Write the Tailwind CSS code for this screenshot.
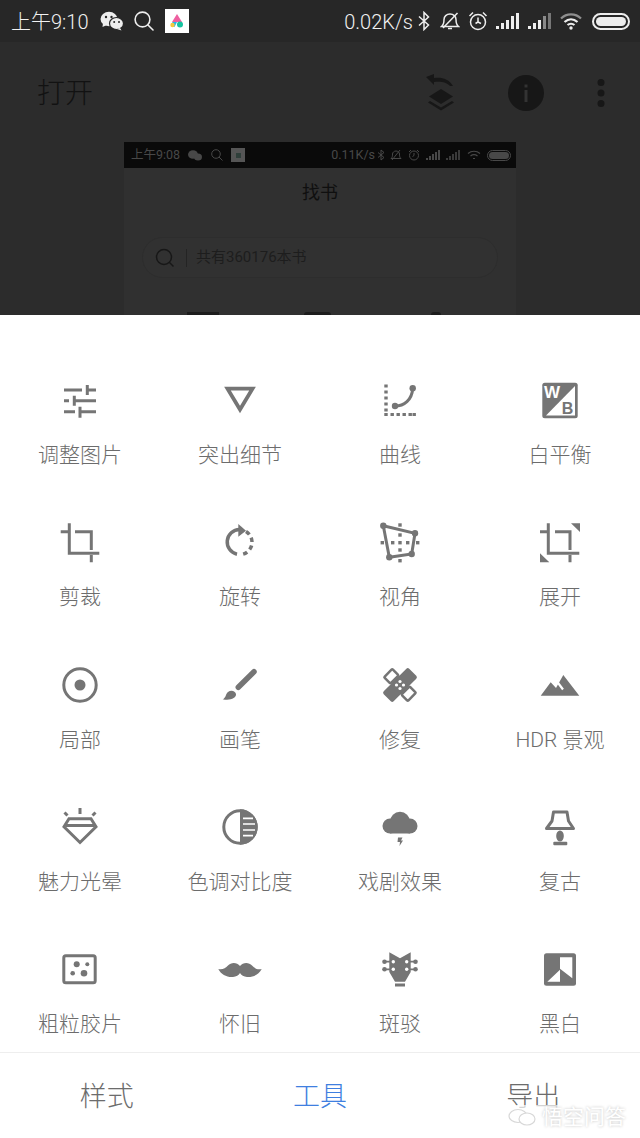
<!doctype html>
<html lang="zh">
<head>
<meta charset="utf-8">
<script src="https://cdn.jsdelivr.net/npm/@tailwindcss/browser@4"></script>
</head>
<body class="m-0 bg-white font-['Roboto','Noto_Sans_CJK_SC',sans-serif]">
<div class="relative w-[640px] h-[1138px] overflow-hidden bg-white">

  <!-- dimmed background screen -->
  <div class="h-[315px] overflow-hidden bg-[#2c2c2c]">
    <div class="flex h-[42px] items-center justify-between bg-[#272727] pl-[11px] pr-[10px] text-[20px] font-light text-[#f2f2f2]">
      <div class="flex items-center">
        <span class="w-[89px] pt-[2px] leading-none">上午9:10</span>
        <svg class="w-[24px] h-[20px] mr-[10px]" viewBox="0 0 24 20" fill="#eeeeee">
          <ellipse cx="9" cy="8" rx="8.500" ry="7.200"/><path d="M3 12 2.500 16 7 14Z"/>
          <ellipse cx="16.500" cy="12.500" rx="7" ry="6" stroke="#272727" stroke-width="1.200"/><path d="M20 17 21.500 19.500 17 18Z"/>
          <circle cx="6" cy="6" r="1.200" fill="#272727"/><circle cx="11.500" cy="6" r="1.200" fill="#272727"/><circle cx="14.200" cy="11" r="1" fill="#272727"/><circle cx="19" cy="11" r="1" fill="#272727"/>
        </svg>
        <svg class="w-[20px] h-[20px] mr-[11px]" viewBox="0 0 20 20" fill="none" stroke="#eeeeee" stroke-width="1.600">
          <circle cx="8.500" cy="8.500" r="7.400"/><path d="M14 14l5 5" stroke-linecap="round"/>
        </svg>
        <svg class="w-[24px] h-[24px]" viewBox="0 0 24 24">
          <rect width="24" height="24" fill="#ffffff"/>
          <path d="M12 5 17 13H7Z" fill="#ee5fa0"/><path d="M7.500 13H12L9.500 18 6 17Z" fill="#25b8e8"/><circle cx="7.500" cy="16" r="2.200" fill="#f6c93c"/><circle cx="15" cy="15.500" r="3" fill="#16c2a0"/>
        </svg>
      </div>
      <div class="flex items-center">
        <span class="mr-[5px] pt-[2px] leading-none">0.02K/s</span>
        <svg class="w-[12px] h-[20px] mr-[10px]" viewBox="0 0 12 20" fill="none" stroke="#eeeeee" stroke-width="1.500"><path d="M1 5.500 10.500 14 6 18.500V1.500L10.500 6 1 14.500"/></svg>
        <svg class="w-[20px] h-[20px] mr-[8px]" viewBox="0 0 20 20" fill="none" stroke="#eeeeee" stroke-width="1.500"><path d="M1.500 15.500h17c-2.500-2-2.500-4-2.500-7 0-3-2.500-5.500-6-5.500S4 5.500 4 8.500c0 3 0 5-2.500 7Z"/><path d="M8 17.500h4"/><path d="M17.500 2 3 17"/></svg>
        <svg class="w-[20px] h-[20px] mr-[8px]" viewBox="0 0 20 20" fill="none" stroke="#eeeeee" stroke-width="1.500"><circle cx="10" cy="11" r="7.500"/><path d="M10 6.500V11l-2.500 1.500M10 11l3 1.500M1.500 5 5 1.500M18.500 5 15 1.500"/></svg>
        <svg class="w-[23px] h-[18px] mr-[9px]" viewBox="0 0 23 18" fill="#eeeeee"><rect x="0" y="14" width="3" height="3"/><rect x="5" y="11" width="3" height="6"/><rect x="10" y="8" width="3" height="9"/><rect x="15" y="4" width="3" height="13"/><rect x="20" y="1" width="3" height="16"/></svg>
        <svg class="w-[23px] h-[18px] mr-[9px]" viewBox="0 0 23 18" fill="#eeeeee"><rect x="0" y="14" width="3" height="3"/><rect x="5" y="11" width="3" height="6"/><rect x="10" y="8" width="3" height="9"/><rect x="15" y="4" width="3" height="13" fill="#8a8a8a"/><rect x="20" y="1" width="3" height="16" fill="#777777"/></svg>
        <svg class="w-[22px] h-[18px] mr-[10px]" viewBox="0 0 22 18" fill="none" stroke-width="2.200"><path d="M1 6.500C6.500 1 15.500 1 21 6.500" stroke="#8f8f8f"/><path d="M4.500 10c4-3.500 9-3.500 13 0" stroke="#eeeeee"/><path d="M7.500 13c2-1.700 5-1.700 7 0" stroke="#eeeeee"/><circle cx="11" cy="16" r="1.700" fill="#eeeeee" stroke="none"/></svg>
        <div class="flex h-[17px] w-[38px] items-center rounded-full border-2 border-[#eeeeee] p-[2px]"><div class="h-full w-full rounded-full bg-[#eeeeee]"></div></div>
      </div>
    </div>

    <div class="flex h-[100px] items-center pl-[37px] pt-[2px] text-[#121212]">
      <span class="w-[380px] pt-[1px] text-[28px] font-light leading-none">打开</span>
      <svg class="w-[40px] h-[44px] mr-[48px] ml-[3px]" viewBox="0 0 40 44" fill="#171717">
        <path d="M21 18 33 25.500 21 33 9 25.500Z"/><path d="M10 30 21 36.500 32 30 34 31.500 21 39.500 8 31.500Z"/>
        <path d="M6 6 14 3V7C22 6 29 8 33 15L30 15C27 11 20 10 14 11V14Z"/>
      </svg>
      <svg class="w-[36px] h-[36px] mr-[52px]" viewBox="0 0 36 36"><circle cx="18" cy="18" r="18" fill="#171717"/><rect x="16.500" y="15" width="3" height="12" fill="#333333"/><rect x="16.500" y="9.500" width="3" height="3" fill="#333333"/></svg>
      <svg class="w-[10px] h-[30px]" viewBox="0 0 10 30" fill="#171717"><circle cx="5" cy="4.500" r="3.500"/><circle cx="5" cy="15" r="3.500"/><circle cx="5" cy="25.500" r="3.500"/></svg>
    </div>

    <div class="ml-[124px] w-[392px] h-[173px] overflow-hidden bg-[#303030]">
      <div class="flex h-[26px] items-center justify-between bg-[#0a0a0a] pl-[7px] pr-[5px] text-[12.500px] text-[#484848]">
        <div class="flex items-center">
          <span class="w-[57px] leading-none">上午9:08</span>
          <svg class="w-[14px] h-[11px] mr-[9px]" viewBox="0 0 14 11" fill="#484848"><ellipse cx="5" cy="4.500" rx="5" ry="4.300"/><ellipse cx="10" cy="7" rx="4" ry="3.500"/></svg>
          <svg class="w-[12px] h-[12px] mr-[8px]" viewBox="0 0 12 12" fill="none" stroke="#484848" stroke-width="1"><circle cx="5" cy="5" r="4.300"/><path d="M8 8l3.500 3.500"/></svg>
          <div class="flex h-[14px] w-[14px] items-center justify-center bg-[#555555]"><div class="h-[5px] w-[5px] bg-[#2f3f3a]"></div></div>
        </div>
        <div class="flex items-center">
          <span class="leading-none mr-[2px]">0.11K/s</span>
          <svg class="w-[8px] h-[12px] mr-[5px]" viewBox="0 0 8 12" fill="none" stroke="#484848"><path d="M1 3.500 7 8.500 4 11V1L7 3.500 1 8.500"/></svg>
          <svg class="w-[12px] h-[12px] mr-[6px]" viewBox="0 0 12 12" fill="none" stroke="#484848"><path d="M1 9.500h10c-1.500-1-1.500-3-1.500-4.500S8 2 6 2 2.500 3.500 2.500 5 2.500 8.500 1 9.500ZM10 1 2 11"/></svg>
          <svg class="w-[12px] h-[12px] mr-[6px]" viewBox="0 0 12 12" fill="none" stroke="#484848"><circle cx="6" cy="6.500" r="4.500"/><path d="M6 4v2.500L4.500 7.500M1 3 3 1M11 3 9 1"/></svg>
          <svg class="w-[14px] h-[10px] mr-[6px]" viewBox="0 0 14 10" fill="#484848"><rect y="8" width="2" height="2"/><rect x="3" y="6" width="2" height="4"/><rect x="6" y="4" width="2" height="6"/><rect x="9" y="2" width="2" height="8"/><rect x="12" width="2" height="10"/></svg>
          <svg class="w-[14px] h-[10px] mr-[7px]" viewBox="0 0 14 10" fill="#3a3a3a"><rect y="8" width="2" height="2"/><rect x="3" y="6" width="2" height="4"/><rect x="6" y="4" width="2" height="6"/><rect x="9" y="2" width="2" height="8"/><rect x="12" width="2" height="10"/></svg>
          <svg class="w-[14px] h-[10px] mr-[6px]" viewBox="0 0 14 10" fill="none" stroke="#484848" stroke-width="1.200"><path d="M1 3.500C4.500.5 9.500.5 13 3.500M3.500 6c2-1.500 5-1.500 7 0M6 8.500h2"/></svg>
          <div class="flex h-[11px] w-[24px] items-center rounded-full border border-[#484848] p-[1px]"><div class="h-full w-full rounded-full bg-[#484848]"></div></div>
        </div>
      </div>
      <div class="flex h-[46px] items-center justify-center pt-[2px] text-[18px] text-[#0f0f0f]">找书</div>
      <div class="mx-[18px] mt-[23px] flex h-[41px] w-[356px] items-center rounded-full border border-[#2d2d2d] bg-[#313131] pl-[12px]">
        <svg class="w-[20px] h-[20px] mr-[11px]" viewBox="0 0 20 20" fill="none" stroke="#171717" stroke-width="1.500"><circle cx="9" cy="9" r="7.500"/><path d="M14.500 14.500l4 4"/></svg>
        <div class="h-[18px] w-px bg-[#242424] mr-[9px]"></div>
        <span class="text-[15px] text-[#1d1d1d]">共有360176本书</span>
      </div>
      <div class="mt-[34px] flex pl-[63px] items-start">
        <div class="h-[3px] w-[32px] bg-[#1c1c1c] mr-[85px]"></div>
        <div class="h-[3px] w-[27px] rounded-t-sm bg-[#1c1c1c] mr-[100px]"></div>
        <div class="h-[3px] w-[10px] rounded-t-full bg-[#1c1c1c]"></div>
      </div>
    </div>
  </div>

  <!-- tool sheet -->
  <div class="h-[737px] overflow-hidden bg-white pt-[61px]">
    <div class="grid grid-cols-4 auto-rows-[142.250px] text-[21px] font-light leading-[30px] text-[#6c6c6c] text-center">

      <div class="flex flex-col items-center gap-4">
        <svg class="w-12 h-12" viewBox="0 0 48 48" fill="none" stroke="#757575" stroke-width="3">
          <path d="M8 14h18M31.300 9v10M31.300 14H40M8 24.700h5M18.300 19.700v10M18.300 24.700H40M8 35.700h11M24 30.700v11M24 35.700H40"/>
        </svg>
        <span>调整图片</span>
      </div>
      <div class="flex flex-col items-center gap-4">
        <svg class="w-12 h-12" viewBox="0 0 48 48" fill="none" stroke="#757575" stroke-width="3.800"><path d="M11.500 12.700H36.500L24 33.500Z"/></svg>
        <span>突出细节</span>
      </div>
      <div class="flex flex-col items-center gap-4">
        <svg class="w-12 h-12" viewBox="0 0 48 48" fill="#757575">
          <rect x="8.300" y="8.500" width="3.400" height="3"/><rect x="8.300" y="14.500" width="3.400" height="3"/><rect x="8.300" y="20.500" width="3.400" height="3"/><rect x="8.300" y="26.500" width="3.400" height="3"/><rect x="8.300" y="32.500" width="3.400" height="3"/><rect x="8.300" y="37" width="3.400" height="3"/>
          <rect x="14.500" y="37" width="3.400" height="3"/><rect x="20.500" y="37" width="3.400" height="3"/><rect x="26.500" y="37" width="3.400" height="3"/><rect x="32.500" y="37" width="3.400" height="3"/><rect x="36.500" y="37" width="3.400" height="3"/>
          <path d="M19 30C28 30 36 24 36.700 12.300" fill="none" stroke="#757575" stroke-width="3"/><circle cx="19" cy="30" r="3.200"/><circle cx="36.700" cy="12.300" r="3.200"/>
        </svg>
        <span>曲线</span>
      </div>
      <div class="flex flex-col items-center gap-4">
        <svg class="w-12 h-12" viewBox="0 0 48 48">
          <rect x="6.300" y="6.700" width="35.400" height="35.600" rx="2.500" fill="#757575"/>
          <path d="M39 10V39.500H10Z" fill="#ffffff"/>
          <text x="16" y="22" text-anchor="middle" font-family="Liberation Sans" font-weight="700" font-size="17" fill="#ffffff">W</text>
          <text x="31.500" y="37.500" text-anchor="middle" font-family="Liberation Sans" font-weight="700" font-size="16" fill="#757575">B</text>
        </svg>
        <span>白平衡</span>
      </div>

      <div class="flex flex-col items-center gap-4">
        <svg class="w-12 h-12" viewBox="0 0 48 48" fill="none" stroke="#757575" stroke-width="3"><path d="M13.300 5.300V35.300H43.300M4.700 13.700H13.300M19 13.700H35.300V32M35.300 37V44.300"/></svg>
        <span>剪裁</span>
      </div>
      <div class="flex flex-col items-center gap-4">
        <svg class="w-12 h-12" viewBox="0 0 48 48" fill="none" stroke="#757575" stroke-width="3.500">
          <path d="M23.500 11.500A12.500 12.500 0 0 0 21 36.200"/>
          <path d="M30 13.500A12.500 12.500 0 0 1 27 36.200" stroke-dasharray="4.500 3.500"/>
          <path d="M22.300 6 30 12.700 22.300 18.700Z" fill="#757575" stroke="none"/>
        </svg>
        <span>旋转</span>
      </div>
      <div class="flex flex-col items-center gap-4">
        <svg class="w-12 h-12" viewBox="0 0 48 48" fill="#757575">
          <path d="M7.300 7.700 39 15.300 35.700 36 13.300 39.300Z" fill="none" stroke="#757575" stroke-width="3"/>
          <circle cx="7.300" cy="7.700" r="3.200"/><circle cx="39" cy="15.300" r="3.200"/><circle cx="35.700" cy="36" r="3.200"/><circle cx="13.300" cy="39.300" r="3.200"/>
          <rect x="22.300" y="5.300" width="3.400" height="3.400"/><rect x="22.300" y="15.300" width="3.400" height="3.400"/><rect x="22.300" y="23" width="3.400" height="3.400"/><rect x="22.300" y="30.300" width="3.400" height="3.400"/><rect x="22.300" y="41" width="3.400" height="3.400"/>
          <rect x="4.600" y="23" width="3.400" height="3.400"/><rect x="15" y="23" width="3.400" height="3.400"/><rect x="30" y="23" width="3.400" height="3.400"/><rect x="40" y="23" width="3.400" height="3.400"/>
        </svg>
        <span>视角</span>
      </div>
      <div class="flex flex-col items-center gap-4">
        <svg class="w-12 h-12" viewBox="0 0 48 48" fill="none" stroke="#757575" stroke-width="3">
          <path d="M12.300 5.300V35.300H43.300M4 13.700H12.300M19 13.700H34V32M34 37V44.300"/>
          <path d="M35 5.300H44V14ZM4 35.300 13.300 44.300H4Z" fill="#757575" stroke="none"/>
        </svg>
        <span>展开</span>
      </div>

      <div class="flex flex-col items-center gap-4">
        <svg class="w-12 h-12" viewBox="0 0 48 48"><circle cx="24" cy="24" r="16.200" fill="none" stroke="#757575" stroke-width="3"/><circle cx="24" cy="24" r="5.500" fill="#757575"/></svg>
        <span>局部</span>
      </div>
      <div class="flex flex-col items-center gap-4">
        <svg class="w-12 h-12" viewBox="0 0 48 48" fill="#757575">
          <path d="M22.300 26.300 38 10.700" stroke="#757575" stroke-width="5.500" stroke-linecap="round"/>
          <path d="M6.700 38.200C10 37 9.500 33 12 31C15 28.500 19.500 30 20 33C20.500 37 14 40 6.700 38.200Z"/>
        </svg>
        <span>画笔</span>
      </div>
      <div class="flex flex-col items-center gap-4">
        <svg class="w-12 h-12" viewBox="0 0 48 48">
          <g transform="rotate(-45 24 24)"><rect x="6" y="17" width="36" height="14" rx="2" fill="#757575"/></g>
          <g transform="rotate(-45 24 24)" fill="none" stroke="#757575" stroke-width="2.500">
            <rect x="18.200" y="7.200" width="11.600" height="9" rx="1"/>
            <rect x="18.200" y="31.800" width="11.600" height="9" rx="1"/>
          </g>
          <g fill="#ffffff"><circle cx="24" cy="20.500" r="1.600"/><circle cx="24" cy="27.500" r="1.600"/><circle cx="20.500" cy="24" r="1.600"/><circle cx="27.500" cy="24" r="1.600"/></g>
        </svg>
        <span>修复</span>
      </div>
      <div class="flex flex-col items-center gap-4">
        <svg class="w-12 h-12" viewBox="0 0 48 48">
          <path d="M4.700 34.700 14.700 21.300 20 27 27.300 14 43.300 34.700Z" fill="#757575"/>
          <path d="M21 20.500 27 28.500" stroke="#ffffff" stroke-width="2.200" fill="none"/>
        </svg>
        <span>HDR 景观</span>
      </div>

      <div class="flex flex-col items-center gap-4">
        <svg class="w-12 h-12" viewBox="0 0 48 48" fill="none" stroke="#757575" stroke-width="3">
          <path d="M13 15.700H35L40 23.700 24 39.500 8 23.700Z"/><path d="M10 22.500H38"/>
          <path d="M24 5v6M8.500 9.500l3 3M39.500 9.500l-3 3"/>
        </svg>
        <span>魅力光晕</span>
      </div>
      <div class="flex flex-col items-center gap-4">
        <svg class="w-12 h-12" viewBox="0 0 48 48">
          <path d="M24 6.300A17.700 17.700 0 0 1 24 41.700Z" fill="#757575"/>
          <circle cx="24" cy="24" r="16.200" fill="none" stroke="#757575" stroke-width="3"/>
          <path d="M27 15.300H37M27 21H39M27 27H39M27 32.700H37" stroke="#ffffff" stroke-width="1.700"/>
        </svg>
        <span>色调对比度</span>
      </div>
      <div class="flex flex-col items-center gap-4">
        <svg class="w-12 h-12" viewBox="0 0 48 48" fill="#757575">
          <circle cx="14" cy="23" r="7.500"/><circle cx="34" cy="23" r="7.500"/><circle cx="24" cy="18.700" r="10"/><rect x="14" y="20" width="20" height="10.500"/>
          <path d="M22 34.500H26.500L25 37.500H27L23.500 43 24 39H21.500Z"/>
        </svg>
        <span>戏剧效果</span>
      </div>
      <div class="flex flex-col items-center gap-4">
        <svg class="w-12 h-12" viewBox="0 0 48 48" fill="#757575">
          <path d="M17.500 9H31L32.500 18 37.500 25.500H10.500L16 18Z" fill="none" stroke="#757575" stroke-width="3" stroke-linejoin="round"/>
          <ellipse cx="24" cy="33" rx="3.800" ry="5.500"/><rect x="17.300" y="38.700" width="14" height="3.500" rx="1"/>
        </svg>
        <span>复古</span>
      </div>

      <div class="flex flex-col items-center gap-4">
        <svg class="w-12 h-12" viewBox="0 0 48 48" fill="#757575">
          <rect x="7.800" y="10.800" width="31.400" height="27" rx="2" fill="none" stroke="#757575" stroke-width="3"/>
          <circle cx="20.700" cy="19.300" r="3"/><circle cx="31.300" cy="19.300" r="2"/><circle cx="16.700" cy="28.300" r="2.300"/><circle cx="28" cy="28.300" r="3.300"/>
        </svg>
        <span>粗粒胶片</span>
      </div>
      <div class="flex flex-col items-center gap-4">
        <svg class="w-12 h-12" viewBox="0 0 48 48" fill="#757575"><path d="M24 21C21 17 15 17 12 20.500C9.500 23.500 6 25 2.300 24C5 29.500 11 32.500 17 32C20 31.700 23 30 24 28C25 30 28 31.700 31 32C37 32.500 43 29.500 45.700 24C42 25 38.500 23.500 36 20.500C33 17 27 17 24 21Z"/></svg>
        <span>怀旧</span>
      </div>
      <div class="flex flex-col items-center gap-4">
        <svg class="w-12 h-12" viewBox="0 0 48 48" fill="#757575">
          <path d="M13.300 7.300 24 13.300 34.700 7.300V27L29 36.700H19L13.300 27Z"/>
          <rect x="19" y="38.500" width="10" height="3"/>
          <path d="M10 16.700H38M10 24.300H38" stroke="#757575" stroke-width="1.800"/>
          <circle cx="8.500" cy="16.700" r="2.300"/><circle cx="8.500" cy="24.300" r="2.300"/><circle cx="39.500" cy="16.700" r="2.300"/><circle cx="39.500" cy="24.300" r="2.300"/>
          <g fill="#ffffff"><circle cx="17.300" cy="16.700" r="1.700"/><circle cx="17.300" cy="24.300" r="1.700"/><circle cx="30.700" cy="16.700" r="1.700"/><circle cx="30.700" cy="24.300" r="1.700"/></g>
        </svg>
        <span>斑驳</span>
      </div>
      <div class="flex flex-col items-center gap-4">
        <svg class="w-12 h-12" viewBox="0 0 48 48">
          <rect x="8" y="8.300" width="32" height="32.400" rx="2.500" fill="#757575"/>
          <path d="M24 12.300H36.300V33.300L24 23.700ZM11.300 36.700 24 24.700V36.700Z" fill="#ffffff"/>
        </svg>
        <span>黑白</span>
      </div>
    </div>
  </div>

  <!-- bottom tabs -->
  <div class="grid h-[86px] grid-cols-3 items-center border-t border-[#eeeeee] bg-white pt-[3px] text-center text-[27px] font-light text-[#6c6c6c]">
    <span>样式</span>
    <span class="text-[#3f7fe0]">工具</span>
    <span>导出</span>
  </div>

  <!-- watermark -->
  <div class="absolute left-[508px] top-[1105px] flex h-[24px] items-center gap-[6px] bg-white/70 pr-[4px] text-[21px] leading-[24px] text-white [text-shadow:0_0_3px_#c0c0c0]">
    <svg class="w-[28px] h-[18px]" viewBox="0 0 28 18" fill="#ffffff" stroke="#d8d8d8" stroke-width="1.200"><ellipse cx="10" cy="8" rx="9" ry="6.500"/><ellipse cx="19" cy="11" rx="8" ry="6"/></svg>
    <span>悟空问答</span>
  </div>
</div>
</body>
</html>
